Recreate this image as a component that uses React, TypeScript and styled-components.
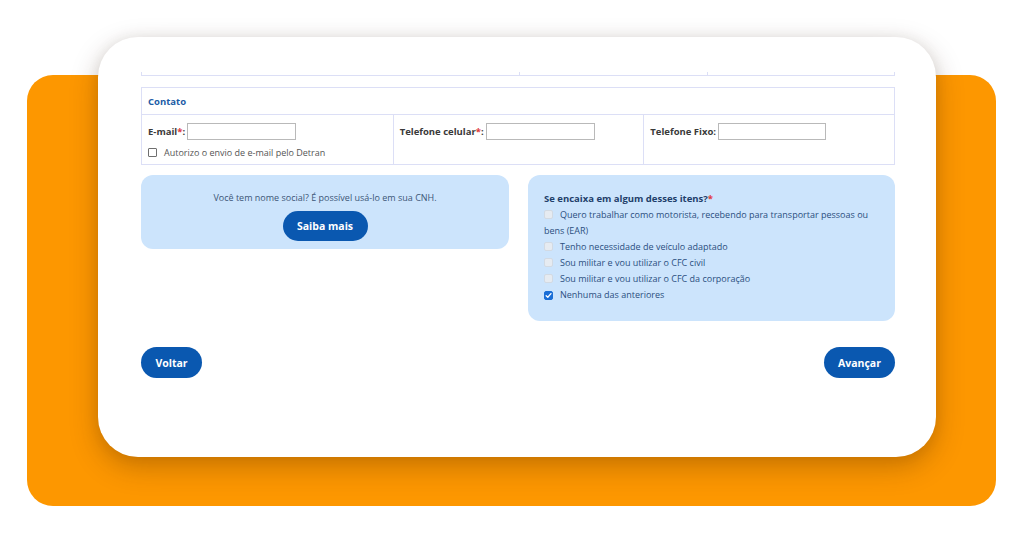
import React from "react";
import styled, { createGlobalStyle } from "styled-components";

const Global = createGlobalStyle`
  html, body { margin: 0; padding: 0; background: #ffffff; }
  body { font-family: "Open Sans", "Noto Sans", sans-serif; }
  * { box-sizing: border-box; }
`;

const Stage = styled.div`
  width: 1024px;
  height: 536px;
  display: grid;
  overflow: hidden;
`;

const Backdrop = styled.div`
  grid-area: 1 / 1;
  margin: 75px 0 0 27px;
  width: 969px;
  height: 431px;
  background: #fd9700;
  border-radius: 26px;
`;

const Card = styled.div`
  grid-area: 1 / 1;
  margin: 37px 0 0 98px;
  width: 838px;
  height: 420px;
  background: #ffffff;
  border-radius: 40px;
  box-shadow: 0 10px 28px rgba(60, 30, 0, 0.28), 0 0 14px rgba(0, 0, 0, 0.06);
  padding: 35px 41px 0 43px;
  display: flex;
  flex-direction: column;
  overflow: hidden;
  position: relative;
`;

const lineColor = "#dcdff6";

const PartialRow = styled.div`
  height: 4px;
  display: grid;
  grid-template-columns: 377px 188px 1fr;
  border: 1px solid ${lineColor};
  border-top: none;
`;

const PartialCell = styled.div`
  & + & { border-left: 1px solid ${lineColor}; }
`;

const Table = styled.div`
  margin-top: 11px;
  border: 1px solid ${lineColor};
`;

const TableHeader = styled.div`
  height: 27px;
  display: flex;
  align-items: center;
  padding-left: 6px;
  border-bottom: 1px solid ${lineColor};
  font-size: 9.5px;
  font-weight: 700;
  color: #1c5ca6;
`;

const TableBody = styled.div`
  display: grid;
  grid-template-columns: 1fr 1fr 1fr;
  height: 49px;
`;

const Cell = styled.div`
  padding: 7px 6px 0 6px;
  & + & { border-left: 1px solid ${lineColor}; }
`;

const FieldLine = styled.div`
  display: flex;
  align-items: center;
  height: 18px;
`;

const Label = styled.span`
  font-size: 9.5px;
  font-weight: 700;
  color: #3a3a3a;
  white-space: nowrap;
`;

const Req = styled.span`
  color: #e0383e;
`;

const TextInput = styled.div<{ $w: number }>`
  width: ${(p) => p.$w}px;
  height: 17px;
  margin-left: 2px;
  border: 1px solid #b9b9b9;
  background: #fff;
`;

const CheckLine = styled.div`
  display: flex;
  align-items: center;
  margin-top: 5px;
  height: 14px;
  font-size: 9px;
  color: #555;
`;

const PlainBox = styled.span`
  width: 9px;
  height: 9px;
  border: 1px solid #6f6f6f;
  border-radius: 1px;
  margin-right: 7px;
  background: #fff;
  flex: none;
`;

const Panels = styled.div`
  margin-top: 10px;
  display: grid;
  grid-template-columns: 368px 1fr;
  column-gap: 19px;
  align-items: start;
`;

const BluePanel = styled.div`
  background: #cce4fc;
  border-radius: 12px;
`;

const SocialPanel = styled(BluePanel)`
  padding: 16px 0 8px;
  display: flex;
  flex-direction: column;
  align-items: center;
`;

const SocialText = styled.div`
  font-size: 9px;
  line-height: 14px;
  color: #3c5677;
`;

const PillButton = styled.button<{ $w: number }>`
  width: ${(p) => p.$w}px;
  height: 31px;
  border: none;
  border-radius: 16px;
  background: #0a58b0;
  color: #ffffff;
  font-family: "Open Sans", "Noto Sans", sans-serif;
  font-weight: 700;
  font-size: 10.5px;
  padding: 0;
  cursor: pointer;
`;

const SocialButton = styled(PillButton)`
  margin-top: 6px;
  height: 30px;
`;

const ItemsPanel = styled(BluePanel)`
  padding: 16px 16px 18px 16px;
`;

const ItemsTitle = styled.div`
  font-size: 9.5px;
  font-weight: 700;
  line-height: 16px;
  color: #1f3f6b;
`;

const Item = styled.div`
  font-size: 9px;
  line-height: 16px;
  color: #2b4f80;
`;

const Box = styled.span<{ $checked?: boolean }>`
  display: inline-flex;
  align-items: center;
  justify-content: center;
  width: 9px;
  height: 9px;
  margin-right: 7px;
  vertical-align: -1px;
  border-radius: 2px;
  background: ${(p) => (p.$checked ? "#1a6ed6" : "#e6ebf1")};
  border: 1px solid ${(p) => (p.$checked ? "#1a6ed6" : "#d2dae3")};
`;

const Footer = styled.div`
  margin-top: 26px;
  display: flex;
  justify-content: space-between;
`;

const Check = () => (
  <svg width="7" height="7" viewBox="0 0 8 8">
    <path d="M1.3 4.2 L3.2 6 L6.8 1.8" fill="none" stroke="#fff" strokeWidth="1.5" strokeLinecap="round" strokeLinejoin="round" />
  </svg>
);

const items = [
  { t: "Quero trabalhar como motorista, recebendo para transportar pessoas ou bens (EAR)", c: false },
  { t: "Tenho necessidade de veículo adaptado", c: false },
  { t: "Sou militar e vou utilizar o CFC civil", c: false },
  { t: "Sou militar e vou utilizar o CFC da corporação", c: false },
  { t: "Nenhuma das anteriores", c: true },
];

export default function App() {
  return (
    <>
      <Global />
      <Stage>
        <Backdrop />
        <Card>
          <PartialRow>
            <PartialCell />
            <PartialCell />
            <PartialCell />
          </PartialRow>
          <Table>
            <TableHeader>Contato</TableHeader>
            <TableBody>
              <Cell>
                <FieldLine>
                  <Label>
                    E-mail<Req>*</Req>:
                  </Label>
                  <TextInput $w={109} />
                </FieldLine>
                <CheckLine>
                  <PlainBox />
                  Autorizo o envio de e-mail pelo Detran
                </CheckLine>
              </Cell>
              <Cell>
                <FieldLine>
                  <Label>
                    Telefone celular<Req>*</Req>:
                  </Label>
                  <TextInput $w={109} />
                </FieldLine>
              </Cell>
              <Cell>
                <FieldLine>
                  <Label>Telefone Fixo:</Label>
                  <TextInput $w={108} />
                </FieldLine>
              </Cell>
            </TableBody>
          </Table>
          <Panels>
            <SocialPanel>
              <SocialText>Você tem nome social? É possível usá-lo em sua CNH.</SocialText>
              <SocialButton $w={85}>Saiba mais</SocialButton>
            </SocialPanel>
            <ItemsPanel>
              <ItemsTitle>
                Se encaixa em algum desses itens?<Req>*</Req>
              </ItemsTitle>
              {items.map((it) => (
                <Item key={it.t}>
                  <Box $checked={it.c}>{it.c && <Check />}</Box>
                  {it.t}
                </Item>
              ))}
            </ItemsPanel>
          </Panels>
          <Footer>
            <PillButton $w={61}>Voltar</PillButton>
            <PillButton $w={71}>Avançar</PillButton>
          </Footer>
        </Card>
      </Stage>
    </>
  );
}
